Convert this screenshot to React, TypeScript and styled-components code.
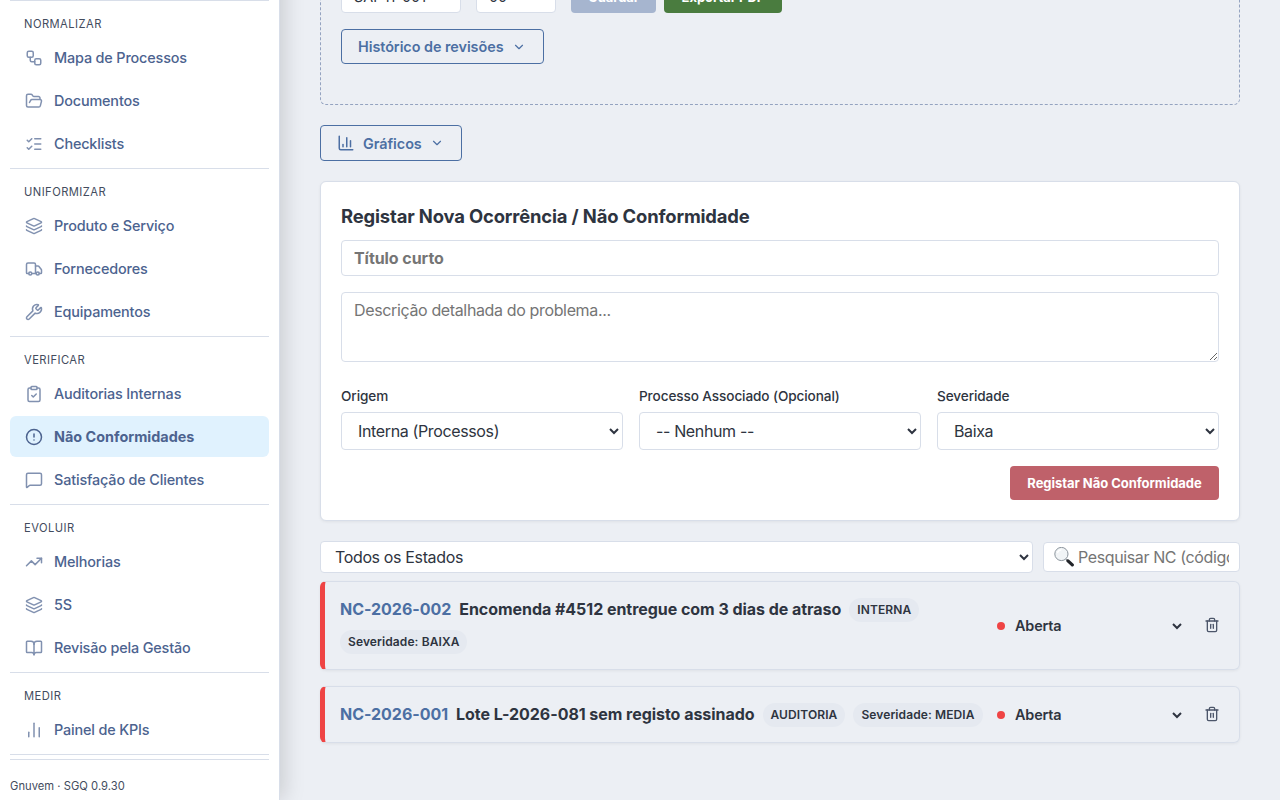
import React from 'react';
import styled, { createGlobalStyle, css } from 'styled-components';
import {
  Workflow, FolderOpen, ListChecks, Layers, Truck, Wrench, ClipboardCheck,
  CircleAlert, MessageSquare, TrendingUp, BookOpen, ChartNoAxesColumn,
  ChartColumn, ChevronDown, Trash2, type LucideIcon,
} from 'lucide-react';

const GlobalStyle = createGlobalStyle`
  *, *::before, *::after { box-sizing: border-box; }
  body {
    margin: 0;
    background: #eceff4;
    color: #2e3440;
    font-family: Inter, 'Liberation Sans', sans-serif;
    font-size: 16px;
    overflow: hidden;
  }
  button, input, select, textarea { font-family: inherit; }
`;

const Page = styled.div`
  display: flex;
  height: 800px;
  overflow: hidden;
`;

const Sidebar = styled.aside`
  flex: 0 0 280px;
  display: flex;
  flex-direction: column;
  margin-top: -40px;
  padding: 40px 10px 0;
  background: #fff;
  border-right: 1px solid #d8dee9;
  box-shadow: 4px 0 20px rgba(0, 0, 0, 0.15);
`;

const NavGroup = styled.nav`
  display: flex;
  flex-direction: column;
  gap: 2px;
  padding-bottom: 4px;
  border-bottom: 1px solid #d8dee9;
  &:first-child { border-top: 1px solid #d8dee9; }
`;

const GroupTitle = styled.div`
  height: 34px;
  padding: 12px 14px 0;
  font-size: 11.2px;
  line-height: 23px;
  letter-spacing: 0.45px;
  color: #434c5e;
  text-transform: uppercase;
`;

const NavItem = styled.a<{ $active?: boolean }>`
  display: flex;
  align-items: center;
  gap: 11px;
  height: 41px;
  padding: 0 15px;
  border-radius: 6px;
  font-size: 14.4px;
  font-weight: 500;
  letter-spacing: -0.15px;
  color: #4c638f;
  svg { opacity: 0.7; }
  ${({ $active }) => $active && css`
    background: #e0f2fe;
    font-weight: 700;
    letter-spacing: 0;
    svg { opacity: 1; }
  `}
`;

const SidebarFooter = styled.footer`
  margin-top: 4px;
  padding-top: 20px;
  border-top: 1px solid #d8dee9;
  font-size: 11.2px;
  line-height: 13px;
  letter-spacing: 0.03px;
  color: #434c5e;
`;

const Main = styled.main`
  flex: 1;
  min-width: 0;
  padding: 0 40px;
`;

const MetaCard = styled.section`
  height: 125px;
  margin-top: -20px;
  padding: 0 20px;
  border: 1px dashed #94a3c0;
  border-top: 0;
  border-radius: 0 0 6px 6px;
`;

const MetaRow = styled.div`
  display: flex;
  margin-bottom: 16px;
`;

const MetaInput = styled.input<{ $width: number }>`
  width: ${({ $width }) => $width}px;
  height: 33px;
  margin-right: 15px;
  padding: 0 12px;
  border: 1px solid #d8dee9;
  border-radius: 4px;
  background: #fff;
  color: #2e3440;
  font-size: 14.4px;
`;

const SolidButton = styled.button<{ $color: string; $width: number; $height: number }>`
  width: ${({ $width }) => $width}px;
  height: ${({ $height }) => $height}px;
  padding: 0;
  border: 0;
  border-radius: 4px;
  background: ${({ $color }) => $color};
  color: #fff;
  font-size: 13px;
  font-weight: 700;
  letter-spacing: -0.04px;
  & + & { margin-left: 8px; }
`;

const OutlineButton = styled.button<{ $height: number }>`
  display: inline-flex;
  align-items: center;
  height: ${({ $height }) => $height}px;
  padding: 0 16px;
  border: 1px solid #4c6fa3;
  border-radius: 4px;
  background: transparent;
  color: #4c6fa3;
  font-size: 14.4px;
  font-weight: 600;
  letter-spacing: -0.05px;
  svg:first-child { margin-right: 8px; }
  svg:last-child { margin: 0 1px 0 8px; }
`;

const ChartsBar = styled.div`
  display: flex;
  margin: 20px 0;
`;

const FormCard = styled.section`
  height: 340px;
  padding: 20px;
  border: 1px solid #d8dee9;
  border-radius: 6px;
  background: #fff;
  box-shadow: 0 1px 3px rgba(0, 0, 0, 0.06);
`;

const FormTitle = styled.h3`
  margin: 0 0 10px;
  font-size: 18.4px;
  font-weight: 700;
  letter-spacing: -0.14px;
  line-height: 28px;
`;

const fieldStyle = css`
  display: block;
  width: 100%;
  border: 1px solid #d8dee9;
  border-radius: 4px;
  background: #fff;
  color: #2e3440;
  font-size: 16px;
  letter-spacing: -0.36px;
  &::placeholder { color: #757575; opacity: 1; }
`;

const TitleInput = styled.input`
  ${fieldStyle}
  height: 36px;
  padding: 0 12px;
  font-weight: 700;
  letter-spacing: -0.06px;
`;

const DescriptionInput = styled.textarea`
  ${fieldStyle}
  height: 70px;
  margin: 16px 0 24px;
  padding: 7px 12px;
  resize: vertical;
`;

const FieldGrid = styled.div`
  display: grid;
  grid-template-columns: repeat(3, 1fr);
  gap: 16px;
`;

const FieldLabel = styled.label`
  display: block;
  font-size: 13.6px;
  font-weight: 500;
  letter-spacing: -0.1px;
  line-height: 20px;
`;

const FieldSelect = styled.select`
  ${fieldStyle}
  height: 38px;
  margin-top: 6px;
  padding: 0 0 0 12px;
`;

const FormActions = styled.div`
  display: flex;
  justify-content: flex-end;
  margin-top: 16px;
`;

const Filters = styled.div`
  display: flex;
  align-items: center;
  gap: 10px;
  margin: 20px 0 8px;
`;

const StateSelect = styled.select`
  ${fieldStyle}
  flex: 1;
  width: auto;
  height: 32px;
  padding: 0 0 0 10px;
`;

const SearchBox = styled.div`
  display: flex;
  align-items: center;
  width: 197px;
  height: 30px;
  padding: 0 10px;
  border: 1px solid #d8dee9;
  border-radius: 4px;
  background: #fff;
`;

const SearchInput = styled.input`
  flex: 1;
  min-width: 0;
  margin-left: 4px;
  padding: 0;
  border: 0;
  outline: 0;
  font-size: 16px;
  letter-spacing: -0.38px;
  &::placeholder { color: #757575; opacity: 1; }
`;

const RecordRow = styled.article<{ $height: number }>`
  display: flex;
  align-items: center;
  height: ${({ $height }) => $height}px;
  margin-bottom: 16px;
  padding: 0 15px;
  border: 1px solid #d8dee9;
  border-left: 5px solid #ef4444;
  border-radius: 6px;
  box-shadow: 0 1px 3px rgba(0, 0, 0, 0.06);
`;

const RecordInfo = styled.div`
  flex: 0 0 649px;
  display: flex;
  flex-wrap: wrap;
  align-items: center;
  gap: 8px;
  line-height: 24px;
  font-weight: 700;
  letter-spacing: -0.04px;
`;

const RecordText = styled.span<{ $accent?: boolean }>`
  height: 24px;
  line-height: 22px;
  color: ${({ $accent }) => ($accent ? '#4c6fa3' : '#2e3440')};
`;

const Tag = styled.span`
  height: 24px;
  padding: 0 8px;
  border-radius: 12px;
  background: #e5e9f0;
  font-size: 12px;
  font-weight: 600;
  letter-spacing: 0.1px;
  line-height: 24px;
  white-space: nowrap;
`;

const StatusDot = styled.span`
  width: 8px;
  height: 8px;
  margin-left: 8px;
  border-radius: 50%;
  background: #ef4444;
`;

const StatusSelect = styled.select`
  width: 174px;
  height: 30px;
  margin-left: 6px;
  padding: 0;
  border: 0;
  background: transparent;
  color: #2e3440;
  font-size: 14.4px;
  font-weight: 600;
  letter-spacing: -0.15px;
`;

const DeleteButton = styled.button`
  display: flex;
  margin-left: auto;
  padding: 0 4px 1px;
  border: 0;
  background: none;
  color: #4c566a;
`;

type NavEntry = { label: string; icon: LucideIcon; active?: boolean };

const groups: { title: string; items: NavEntry[] }[] = [
  { title: 'Normalizar', items: [
    { label: 'Mapa de Processos', icon: Workflow },
    { label: 'Documentos', icon: FolderOpen },
    { label: 'Checklists', icon: ListChecks },
  ] },
  { title: 'Uniformizar', items: [
    { label: 'Produto e Serviço', icon: Layers },
    { label: 'Fornecedores', icon: Truck },
    { label: 'Equipamentos', icon: Wrench },
  ] },
  { title: 'Verificar', items: [
    { label: 'Auditorias Internas', icon: ClipboardCheck },
    { label: 'Não Conformidades', icon: CircleAlert, active: true },
    { label: 'Satisfação de Clientes', icon: MessageSquare },
  ] },
  { title: 'Evoluir', items: [
    { label: 'Melhorias', icon: TrendingUp },
    { label: '5S', icon: Layers },
    { label: 'Revisão pela Gestão', icon: BookOpen },
  ] },
  { title: 'Medir', items: [{ label: 'Painel de KPIs', icon: ChartNoAxesColumn }] },
];

const fields = [
  { label: 'Origem', value: 'Interna (Processos)' },
  { label: 'Processo Associado (Opcional)', value: '-- Nenhum --' },
  { label: 'Severidade', value: 'Baixa' },
];

const records = [
  { code: 'NC-2026-002', title: 'Encomenda #4512 entregue com 3 dias de atraso', tags: ['INTERNA', 'Severidade: BAIXA'], height: 89 },
  { code: 'NC-2026-001', title: 'Lote L-2026-081 sem registo assinado', tags: ['AUDITORIA', 'Severidade: MEDIA'], height: 57.2 },
];

function MagnifierIcon() {
  return (
    <svg width="20" height="20" viewBox="0 0 20 20" fill="none">
      <path d="M12.2 12.2 L14.5 14.5" stroke="#8a9096" strokeWidth="1.6" />
      <path d="M14 13.9 L18.3 17.9" stroke="#22252a" strokeWidth="3.2" strokeLinecap="round" />
      <circle cx="7.4" cy="7" r="6.6" fill="#f1f4f6" stroke="#8b949c" strokeWidth="1" />
      <path d="M3.4 6a4.4 4.4 0 0 1 4-3.2" stroke="#fff" strokeWidth="1.2" />
    </svg>
  );
}

export default function App() {
  return (
    <Page>
      <GlobalStyle />
      <Sidebar>
        {groups.map((group) => (
          <NavGroup key={group.title}>
            <GroupTitle>{group.title}</GroupTitle>
            {group.items.map(({ label, icon: Icon, active }) => (
              <NavItem key={label} $active={active}>
                <Icon size={18} strokeWidth={2} />
                {label}
              </NavItem>
            ))}
          </NavGroup>
        ))}
        <SidebarFooter>Gnuvem · SGQ 0.9.30</SidebarFooter>
      </Sidebar>
      <Main>
        <MetaCard>
          <MetaRow>
            <MetaInput $width={120} defaultValue="SAI-11-001" />
            <MetaInput $width={80} defaultValue="00" />
            <SolidButton $color="#a6b5cf" $width={85} $height={33}>Guardar</SolidButton>
            <SolidButton $color="#4a7c3f" $width={118} $height={33}>Exportar PDF</SolidButton>
          </MetaRow>
          <OutlineButton $height={35}>
            <span>Histórico de revisões</span>
            <ChevronDown size={14} />
          </OutlineButton>
        </MetaCard>
        <ChartsBar>
          <OutlineButton $height={36}>
            <ChartColumn size={18} />
            Gráficos
            <ChevronDown size={14} />
          </OutlineButton>
        </ChartsBar>
        <FormCard>
          <FormTitle>Registar Nova Ocorrência / Não Conformidade</FormTitle>
          <TitleInput placeholder="Título curto" />
          <DescriptionInput placeholder="Descrição detalhada do problema..." />
          <FieldGrid>
            {fields.map((field) => (
              <div key={field.label}>
                <FieldLabel>{field.label}</FieldLabel>
                <FieldSelect><option>{field.value}</option></FieldSelect>
              </div>
            ))}
          </FieldGrid>
          <FormActions>
            <SolidButton $color="#bf616a" $width={209} $height={34}>Registar Não Conformidade</SolidButton>
          </FormActions>
        </FormCard>
        <Filters>
          <StateSelect><option>Todos os Estados</option></StateSelect>
          <SearchBox>
            <MagnifierIcon />
            <SearchInput placeholder="Pesquisar NC (código)" />
          </SearchBox>
        </Filters>
        {records.map((record) => (
          <RecordRow key={record.code} $height={record.height}>
            <RecordInfo>
              <RecordText $accent>{record.code}</RecordText>
              <RecordText>{record.title}</RecordText>
              {record.tags.map((tag) => <Tag key={tag}>{tag}</Tag>)}
            </RecordInfo>
            <StatusDot />
            <StatusSelect><option>Aberta</option></StatusSelect>
            <DeleteButton><Trash2 size={16} /></DeleteButton>
          </RecordRow>
        ))}
      </Main>
    </Page>
  );
}
